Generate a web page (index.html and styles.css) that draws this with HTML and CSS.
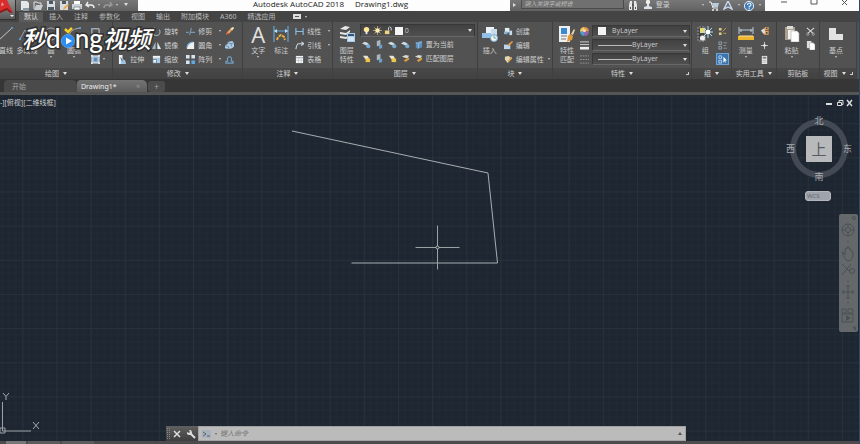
FILE: index.html
```html
<!DOCTYPE html>
<html lang="zh-CN">
<head>
<meta charset="utf-8">
<title>Autodesk AutoCAD 2018 - Drawing1.dwg</title>
<link rel="stylesheet" href="styles.css">
</head>
<body>
<svg class="sprite" aria-hidden="true">
  <symbol id="new" viewBox="0 0 10 10"><path d="M1 0h6l2 2v7H1z" fill="#e4e8ea"/><path d="M3 7h6v3H3z" fill="#8b9ba5"/></symbol>
  <symbol id="open" viewBox="0 0 10 10"><path d="M1 8V1h3l1 1h3v2" fill="none" stroke="#e2e2e2"/><path d="M3 4h7L8 9H1z" fill="#c5cdd2"/></symbol>
  <symbol id="save" viewBox="0 0 10 10"><path d="M1 0h8v9H1z" fill="#d5dce2"/><path d="M3 0h4v3H3zM2 6h6v3H2z" fill="#4d5962"/></symbol>
  <symbol id="saveas" viewBox="0 0 10 10"><path d="M1 0h8v9H1z" fill="#d5dce2"/><path d="M3 0h4v3H3z" fill="#4d5962"/><path d="M4 9l1-3 4-3 1 1-4 4z" fill="#eba949"/></symbol>
  <symbol id="print" viewBox="0 0 10 10"><path d="M2 0h6v4H2z" fill="#fff"/><path d="M0 3h10v5H0z" fill="#cbd3d9"/><path d="M2 6h6v3H2z" fill="#f5f5f5" stroke="#59636a" stroke-width=".6"/></symbol>
  <symbol id="undo" viewBox="0 0 10 10"><path d="M3 1L1 4l3 2M1 4h5q3 0 3 3" fill="none" stroke="#eee" stroke-width="1.4"/></symbol>
  <symbol id="redo" viewBox="0 0 10 10"><path d="M7 1l2 3-3 2M9 4H4Q1 4 1 7" fill="none" stroke="#999" stroke-width="1.4"/></symbol>
  <symbol id="glasses" viewBox="0 0 10 10"><path d="M1 9V4l1-4h2v9zM6 9V0h2l1 4v5z" fill="#e6e6e6"/><path d="M4 3h2v2H4zM2 6h1v2H2zM7 6h1v2H7z" fill="#555"/></symbol>
  <symbol id="user" viewBox="0 0 10 10"><circle cx="5" cy="2" r="2.2" fill="#eee"/><path d="M4 4h2v2l3 1v2H1V7l3-1z" fill="#dce3ea"/></symbol>
  <symbol id="cart" viewBox="0 0 10 10"><path d="M0 1h2l2 6h5" fill="none" stroke="#eee"/><path d="M3 2h7L9 6H4z" fill="#b9cada"/><circle cx="4" cy="9" r="1" fill="#eee"/><circle cx="8" cy="9" r="1" fill="#eee"/></symbol>
  <symbol id="app" viewBox="0 0 10 10"><path d="M5 0L1 8l4-2 4 2z" fill="none" stroke="#c9dff6" stroke-width="1.3"/></symbol>
  <symbol id="help" viewBox="0 0 10 10"><circle cx="5" cy="5" r="4.6" fill="#437bb6" stroke="#e3eef8"/><path d="M3.5 4q0-2 1.7-2T7 3.7Q7 4.700 5.200 5.500V6.500M5.200 7.300v1" fill="none" stroke="#fff" stroke-width="1.1"/></symbol>
  <symbol id="line" viewBox="0 0 16 16"><path d="M1 14L14 2" stroke="#bdc5ca"/><path d="M0 13h2v2H0zM13 1h2v2h-2z" fill="#5b9ad0"/></symbol>
  <symbol id="pline" viewBox="0 0 16 16"><path d="M1 13L6 4l6 7q4 0 2-6" fill="none" stroke="#9a9fa3"/><path d="M0 12h2v2H0z" fill="#5b9ad0"/></symbol>
  <symbol id="circle" viewBox="0 0 16 16"><circle cx="8" cy="8" r="6" fill="none" stroke="#a5a5a5"/><path d="M7 7h2v2H7z" fill="#5b9ad0"/></symbol>
  <symbol id="arc" viewBox="0 0 16 16"><path d="M2 14Q2 3 14 2" fill="none" stroke="#a5a5a5"/><path d="M1 13h2v2H1zM13 1h2v2h-2z" fill="#5b9ad0"/></symbol>
  <symbol id="rect" viewBox="0 0 10 10"><path d="M1 2h8v6H1z" fill="none" stroke="#ddd"/><path d="M0 1h2v2H0zM8 7h2v2H8z" fill="#68a7dd"/></symbol>
  <symbol id="hatch" viewBox="0 0 10 10"><path d="M1 1h8v8H1z" fill="#a5c3de" stroke="#e0e0e0"/><path d="M3 3h4v4H3z" fill="#5e8eb9"/><path d="M0 0h2v2H0zM8 0h2v2H8zM0 8h2v2H0zM8 8h2v2H8z" fill="#dce8f3"/></symbol>
  <symbol id="stretch" viewBox="0 0 10 10"><path d="M1 0h4v10H1z" fill="#eee"/><path d="M4 4l4 2 1 4H3z" fill="#9ec7e8"/><path d="M3 3l2 4" stroke="#365d7d"/></symbol>
  <symbol id="rotate" viewBox="0 0 10 10"><path d="M3 2a4 4 0 1 0 5 1M3 2V0M3 2H1" fill="none" stroke="#9fabb5" stroke-width="1.2"/></symbol>
  <symbol id="mirror" viewBox="0 0 10 10"><path d="M4 1v8H0z" fill="#9db9d0"/><path d="M6 1v8h4z" fill="#e7ebed"/></symbol>
  <symbol id="scale" viewBox="0 0 10 10"><path d="M1 1h8v8H1z" fill="#a9cbe6"/><path d="M1 1h8v2H1z" fill="#f2f2f2"/><path d="M1 5h4v4H1z" fill="#f0f0f0" stroke="#456987" stroke-width=".7"/></symbol>
  <symbol id="trim" viewBox="0 0 10 10"><path d="M0 6h3M5 6h5M6 1L4 9" stroke="#7899b3" stroke-width="1.2"/></symbol>
  <symbol id="fillet" viewBox="0 0 10 10"><path d="M1 9V6Q2 1 8 1h1v8z" fill="#f0f0ee"/><path d="M1 7Q2 2 8 1" fill="none" stroke="#69a9db" stroke-width="1.4"/></symbol>
  <symbol id="array" viewBox="0 0 10 10"><path d="M0 0h4v4H0zM6 0h4v4H6zM0 6h4v4H0z" fill="#d6e5f0"/><path d="M6 6h4v4H6z" fill="#61a7e2"/></symbol>
  <symbol id="erase" viewBox="0 0 10 10"><path d="M1 8l2-3 5-5 2 1-5 6z" fill="#e8a15b"/><path d="M1 9l1-3 3 1z" fill="#e95c42"/><path d="M6 2l3-2 1 1-2 3z" fill="#ebe1c5"/></symbol>
  <symbol id="explode" viewBox="0 0 10 10"><path d="M0 5l3-2V1l5-1 2 2v4L8 8 4 9 0 8z" fill="#accce6"/><path d="M0 5l4 1v3M3 2l4 1 3-1M7 3v3" fill="none" stroke="#587b9a" stroke-width=".8"/></symbol>
  <symbol id="offset" viewBox="0 0 10 10"><path d="M1 9V7h2q-1-5 2-5t2 5h2v2z" fill="none" stroke="#72a4ca" stroke-width="1.2"/></symbol>
  <symbol id="dim" viewBox="0 0 16 16"><path d="M1 0v16M15 0v16M1 5h14" stroke="#62a4d7" stroke-width="1.2"/><path d="M1 5l3-2v4zM15 5l-3-2v4z" fill="#bde0fa"/><path d="M4 14l1-3 3-2 3 2 1 3" fill="none" stroke="#e8ae42" stroke-width="2" stroke-dasharray="3 1"/></symbol>
  <symbol id="linear" viewBox="0 0 10 10"><path d="M1 1v8M9 1v8M1 5h8" stroke="#8cbbe0" stroke-width="1.3"/></symbol>
  <symbol id="leader" viewBox="0 0 10 10"><path d="M1 9Q2 3 4 3h5M7 1l3 2-3 2" fill="none" stroke="#cbd8e2" stroke-width="1.2"/></symbol>
  <symbol id="table" viewBox="0 0 10 10"><path d="M1 1h8v8H1z" fill="#f4f4f4"/><path d="M1 3h8" stroke="#8c9da9"/><path d="M4 3v6M7 3v6M1 6h8" stroke="#b7bfc5" stroke-width=".6"/></symbol>
  <symbol id="layers" viewBox="0 0 16 16"><path d="M1 3l5-3 5 1-4 3zM1 6l6 1 4-3v2L7 9 1 8zM1 10l6 1 3-2v2l-3 2-6-1z" fill="#e8e8e8"/><path d="M8 7h8v9H8z" fill="#a9cae7"/><path d="M9 8h6v2H9z" fill="#31587b"/><path d="M9 12h6M9 14h6" stroke="#fff"/></symbol>
  <symbol id="bulb" viewBox="0 0 10 10"><circle cx="5" cy="4" r="3" fill="#ffe894"/><path d="M4 6h2v3H4z" fill="#eee"/></symbol>
  <symbol id="sun" viewBox="0 0 10 10"><path d="M5 0v10M0 5h10M1.500 1.500l7 7M8.500 1.500l-7 7" stroke="#b3a67c"/><circle cx="5" cy="5" r="2.500" fill="#fff0b0"/></symbol>
  <symbol id="lock" viewBox="0 0 10 10"><path d="M1 5h5v4H1z" fill="#f0d383"/><path d="M5 5V2q1-2 3 0v3" fill="none" stroke="#ddd"/></symbol>
  <symbol id="layer-a" viewBox="0 0 10 10"><path d="M0 4l3-2 3 1 2 2-3 1z" fill="#d4dadd"/><circle cx="7" cy="7" r="2.300" fill="#75acd7"/></symbol>
  <symbol id="layer-b" viewBox="0 0 10 10"><path d="M2 1l4-1v6l-4 1z" fill="#a9b6c1"/><path d="M4 6l4-1v4l-3 1z" fill="#6c9fcc"/></symbol>
  <symbol id="layer-c" viewBox="0 0 10 10"><path d="M1 2h5l2 3-4 1z" fill="#e9e3cf"/><path d="M4 5h5v4H4z" fill="#ecc54c"/></symbol>
  <symbol id="layer-d" viewBox="0 0 10 10"><path d="M1 3l4-2 4 1-2 3z" fill="#d6d8cf"/><path d="M3 7l6-3v2L5 9z" fill="#df9e3c"/></symbol>
  <symbol id="layer-e" viewBox="0 0 10 10"><path d="M2 3l5-2 2 1v6l-5 2-2-2z" fill="#5c91bf"/><path d="M2 3l3 1v5M5 4l4-2" fill="none" stroke="#a3bdd2"/></symbol>
  <symbol id="insert" viewBox="0 0 16 16"><path d="M4 1h8v7H4z" fill="#ecf2f6"/><path d="M0 7h9v5H0z" fill="#91c1e8"/><path d="M9 3h6v6H9z" fill="#c7ddec"/><circle cx="12" cy="12" r="3.500" fill="#f1f3f5" stroke="#82b1d7"/><path d="M12 9v3h2" fill="none" stroke="#6aa"/></symbol>
  <symbol id="create" viewBox="0 0 10 10"><path d="M1 1h5v5H1z" fill="#e3edf4"/><path d="M0 5h4v3H0z" fill="#81b4dc"/><path d="M6 4h3v5H6z" fill="#c4dcee"/></symbol>
  <symbol id="edit" viewBox="0 0 10 10"><path d="M0 4h7v5H0z" fill="#b9d7ef"/><path d="M4 6l1-3 4-3 1 1-4 4z" fill="#e99b47"/></symbol>
  <symbol id="attr" viewBox="0 0 10 10"><path d="M1 2l4-1 4 3-5 5-3-4z" fill="#ded8b9"/><path d="M4 7l4-5 1 1-4 5z" fill="#e5a035"/></symbol>
  <symbol id="match" viewBox="0 0 16 16"><path d="M0 0h11v16H0z" fill="#eef0f2"/><path d="M2 2h6v6H2z" fill="#398ace"/><path d="M2 10h6M2 13h5" stroke="#777"/><path d="M9 10l2-2 3 2-1 4-5 2z" fill="#e29b38"/><path d="M12 8l3-5 1 1-2 5z" fill="#ecd3b1"/></symbol>
  <symbol id="wheel" viewBox="0 0 10 10"><path d="M5 5V0a5 5 0 0 1 5 5z" fill="#eb9142"/><path d="M5 5h5a5 5 0 0 1-5 5z" fill="#9a60aa"/><path d="M5 5v5a5 5 0 0 1-5-5z" fill="#5098d1"/><path d="M5 5H0a5 5 0 0 1 5-5z" fill="#f2cf59"/><circle cx="5" cy="4" r="1.700" fill="#f3d9d0"/></symbol>
  <symbol id="weight" viewBox="0 0 10 10"><path d="M0 1h10M0 4h10" stroke="#ddd"/><path d="M0 8h10" stroke="#eee" stroke-width="3"/></symbol>
  <symbol id="ltype" viewBox="0 0 10 10"><path d="M0 1h10M0 5h10M0 9h10" stroke="#999" stroke-dasharray="2 1"/></symbol>
  <symbol id="group" viewBox="0 0 16 16"><path d="M1 1v14h7V1z" fill="#444" stroke="#999" stroke-dasharray="2 1"/><path d="M3 2h5v5H3z" fill="#e8da75"/><circle cx="5.500" cy="12" r="2.600" fill="#eee"/><path d="M11 0v12M5 6h11M7 2l8 8M15 2l-8 8" stroke="#a7daf9"/><circle cx="11" cy="6" r="2.300" fill="#fff"/></symbol>
  <symbol id="ungroup" viewBox="0 0 10 10"><path d="M1 1h3v3H1zM1 6h3v3H1z" fill="#d5cd83"/><path d="M5 5l4-4M6 7h3" stroke="#dda04a"/></symbol>
  <symbol id="gedit" viewBox="0 0 10 10"><path d="M1 1h3v3H1zM1 6h3v3H1z" fill="none" stroke="#98a7b2"/><path d="M6 2h4M6 5h3M6 8h4" stroke="#8699a8"/></symbol>
  <symbol id="gsel" viewBox="0 0 10 10"><path d="M1 1h3v3H1zM1 6h3v3H1z" fill="none" stroke="#b5d4ef"/><path d="M6 2v7l1-2 2 2-1-3h2z" fill="#fff"/></symbol>
  <symbol id="measure" viewBox="0 0 16 16"><path d="M1 1v7M15 1v7M1 4h14" stroke="#b8cbd7"/><path d="M3 3v3M13 3v3" stroke="#b8cbd7"/><path d="M0 10h16v4H0z" fill="#eeb52e"/><path d="M1 10h14" stroke="#ffe39a"/></symbol>
  <symbol id="quick" viewBox="0 0 10 10"><path d="M1 4l4-3 1 4-1 4z" fill="#ddd"/><path d="M6 0h3v3H6zM6 5h3v3H6z" fill="none" stroke="#eba14f" stroke-width="1.200"/></symbol>
  <symbol id="point" viewBox="0 0 10 10"><path d="M5 1v8M1 5h8" stroke="#ccc"/><circle cx="5" cy="5" r="1.400" fill="#eee"/></symbol>
  <symbol id="calc" viewBox="0 0 10 10"><path d="M2 1h6v9H2z" fill="#e7e7e7"/><path d="M3 2h4v2H3z" fill="#737b82"/><path d="M3 6h4M3 8h4" stroke="#a1a1a1" stroke-dasharray="1 .5"/></symbol>
  <symbol id="paste" viewBox="0 0 16 16"><path d="M1 1h10v13H1z" fill="#aaa08c"/><path d="M3 0h6v3H3z" fill="#ddd"/><path d="M4 4h6v9H4z" fill="#f2f2f2"/><path d="M7 5h6l2 2v9H7z" fill="#fff" stroke="#a5a5a5" stroke-width=".6"/></symbol>
  <symbol id="cut" viewBox="0 0 10 10"><path d="M1 1l7 6M9 1L2 7" stroke="#ddd" stroke-width="1.200"/><circle cx="2" cy="8" r="1.300" fill="none" stroke="#aaa"/><circle cx="8" cy="8" r="1.300" fill="none" stroke="#aaa"/></symbol>
  <symbol id="copy" viewBox="0 0 10 10"><path d="M1 0h5v8H1z" fill="#ddd"/><path d="M4 2h4l2 2v6H4z" fill="#fff" stroke="#999" stroke-width=".5"/></symbol>
  <symbol id="base" viewBox="0 0 16 16"><path d="M1 2h7v6h7v6H1z" fill="#e3e3e3"/></symbol>
</svg>

<header class="titlebar">
  <div class="quick">
    <button aria-label="新建"><svg><use href="#new"/></svg></button>
    <button aria-label="打开"><svg><use href="#open"/></svg></button>
    <button aria-label="保存"><svg><use href="#save"/></svg></button>
    <button aria-label="另存为"><svg><use href="#saveas"/></svg></button>
    <button aria-label="打印"><svg><use href="#print"/></svg></button>
    <button aria-label="放弃"><svg><use href="#undo"/></svg></button><i class="arrow"></i>
    <button aria-label="重做"><svg><use href="#redo"/></svg></button><i class="arrow"></i><i class="arrow big"></i>
  </div>
  <h1 class="title"><span>Autodesk AutoCAD 2018</span><span>Drawing1.dwg</span></h1>
  <div class="info">
    <i class="play"></i>
    <input class="search" type="search" aria-label="搜索" placeholder="键入关键字或短语">
    <button aria-label="查找"><svg><use href="#glasses"/></svg></button>
    <button class="login"><svg><use href="#user"/></svg>登录</button><i class="arrow"></i>
    <button aria-label="商店"><svg><use href="#cart"/></svg></button>
    <button aria-label="应用"><svg><use href="#app"/></svg></button><i class="arrow"></i>
    <button aria-label="帮助"><svg><use href="#help"/></svg></button><i class="arrow"></i>
  </div>
  <div class="window">
    <button aria-label="最小化"><svg viewBox="0 0 10 10"><path d="M2 2h6"/></svg></button>
    <button aria-label="最大化"><svg viewBox="0 0 10 10"><path d="M2 0v4h6V0"/></svg></button>
    <button aria-label="关闭"><svg viewBox="0 0 10 10"><path d="M3 0l5 5M8 0L3 5"/></svg></button>
  </div>
  <button class="logo" aria-label="应用程序菜单"><svg viewBox="0 0 15 19"><path d="M0 0h7l6 13-4-1-2-3-7 4z" fill="#d92c2c"/><path d="M0 11l7-3 6 5-4-1-2-2-7 3z" fill="#8e1717"/><path d="M1 6l1-4 2 3z" fill="#f1a0a0"/><path d="M10 15h4l-2 2z" fill="#eee"/></svg></button>
</header>

<nav class="tabs">
  <a href="#" class="current">默认</a><a href="#">插入</a><a href="#">注释</a><a href="#">参数化</a><a href="#">视图</a><a href="#">输出</a><a href="#">附加模块</a><a href="#">A360</a><a href="#">精选应用</a>
  <button class="minimize" aria-label="最小化功能区"><span></span><i class="arrow"></i></button>
</nav>

<main class="ribbon">
  <section class="panel draw">
    <div class="tools">
      <button class="large first"><svg><use href="#line"/></svg>直线</button>
      <button class="large wide"><svg><use href="#pline"/></svg>多段线</button>
      <button class="large"><svg><use href="#circle"/></svg>圆<i class="arrow"></i></button>
      <button class="large"><svg><use href="#arc"/></svg>圆弧<i class="arrow"></i></button>
      <div class="stack">
        <button class="small" aria-label="矩形"><svg><use href="#rect"/></svg></button>
        <button class="small" aria-label="椭圆"></button>
        <button class="small" aria-label="图案填充"><svg><use href="#hatch"/></svg><i class="arrow"></i></button>
      </div>
    </div>
    <footer>绘图<i class="arrow big"></i></footer>
  </section>
  <section class="panel modify">
    <div class="tools">
      <div class="stack end"><button class="small"><svg><use href="#stretch"/></svg>拉伸</button></div>
      <div class="stack">
        <button class="small"><svg><use href="#rotate"/></svg>旋转</button>
        <button class="small"><svg><use href="#mirror"/></svg>镜像</button>
        <button class="small"><svg><use href="#scale"/></svg>缩放</button>
      </div>
      <div class="stack">
        <button class="small spread"><svg><use href="#trim"/></svg>修剪<i class="arrow"></i></button>
        <button class="small spread"><svg><use href="#fillet"/></svg>圆角<i class="arrow"></i></button>
        <button class="small spread"><svg><use href="#array"/></svg>阵列<i class="arrow"></i></button>
      </div>
      <div class="stack">
        <button class="small" aria-label="删除"><svg><use href="#erase"/></svg></button>
        <button class="small" aria-label="分解"><svg><use href="#explode"/></svg></button>
        <button class="small" aria-label="偏移"><svg><use href="#offset"/></svg></button>
      </div>
    </div>
    <footer>修改<i class="arrow big"></i></footer>
  </section>
  <section class="panel annotate">
    <div class="tools">
      <button class="large"><span class="glyph">A</span>文字<i class="arrow"></i></button>
      <button class="large"><svg><use href="#dim"/></svg>标注</button>
      <div class="stack">
        <button class="small spread"><svg><use href="#linear"/></svg>线性<i class="arrow"></i></button>
        <button class="small spread"><svg><use href="#leader"/></svg>引线<i class="arrow"></i></button>
        <button class="small"><svg><use href="#table"/></svg>表格</button>
      </div>
    </div>
    <footer>注释<i class="arrow big"></i></footer>
  </section>
  <section class="panel layer">
    <div class="tools">
      <button class="large"><svg><use href="#layers"/></svg>图层<br>特性</button>
      <div class="stack fill">
        <label class="combo"><svg><use href="#bulb"/></svg><svg><use href="#sun"/></svg><svg><use href="#lock"/></svg><span class="swatch"></span><select aria-label="图层"><option>0</option></select><i class="arrow big"></i></label>
        <div class="row"><svg><use href="#layer-a"/></svg><svg><use href="#layer-b"/></svg><svg><use href="#layer-a"/></svg><svg><use href="#layer-a"/></svg><button class="small"><svg><use href="#layer-e"/></svg>置为当前</button></div>
        <div class="row"><svg><use href="#layer-c"/></svg><svg><use href="#layer-b"/></svg><svg><use href="#layer-c"/></svg><svg><use href="#layer-d"/></svg><button class="small"><svg><use href="#layer-d"/></svg>匹配图层</button></div>
      </div>
    </div>
    <footer>图层<i class="arrow big"></i></footer>
  </section>
  <section class="panel block">
    <div class="tools">
      <button class="large"><svg><use href="#insert"/></svg>插入</button>
      <div class="stack">
        <button class="small"><svg><use href="#create"/></svg>创建</button>
        <button class="small"><svg><use href="#edit"/></svg>编辑</button>
        <button class="small spread"><svg><use href="#attr"/></svg>编辑属性<i class="arrow"></i></button>
      </div>
    </div>
    <footer>块<i class="arrow big"></i></footer>
  </section>
  <section class="panel props">
    <div class="tools">
      <button class="large"><svg><use href="#match"/></svg>特性<br>匹配</button>
      <div class="stack fill">
        <div class="row"><svg><use href="#wheel"/></svg><label class="combo"><span class="swatch"></span><select aria-label="颜色"><option>ByLayer</option></select><i class="arrow big"></i></label></div>
        <div class="row"><svg><use href="#weight"/></svg><label class="combo"><span class="rule"></span><select aria-label="线宽"><option>ByLayer</option></select><i class="arrow big"></i></label></div>
        <div class="row"><svg><use href="#ltype"/></svg><label class="combo"><span class="rule"></span><select aria-label="线型"><option>ByLayer</option></select><i class="arrow big"></i></label></div>
      </div>
    </div>
    <footer>特性<i class="arrow big"></i><i class="corner"></i></footer>
  </section>
  <section class="panel grp">
    <div class="tools">
      <button class="large"><svg><use href="#group"/></svg>组</button>
      <div class="stack">
        <button class="small" aria-label="解除编组"><svg><use href="#ungroup"/></svg></button>
        <button class="small" aria-label="组编辑"><svg><use href="#gedit"/></svg></button>
        <button class="small on" aria-label="启用组选择"><svg><use href="#gsel"/></svg></button>
      </div>
    </div>
    <footer>组<i class="arrow big"></i></footer>
  </section>
  <section class="panel util">
    <div class="tools">
      <button class="large"><svg><use href="#measure"/></svg>测量<i class="arrow"></i></button>
      <div class="stack">
        <button class="small" aria-label="快速选择"><svg><use href="#quick"/></svg></button>
        <button class="small" aria-label="点坐标"><svg><use href="#point"/></svg></button>
        <button class="small" aria-label="计算器"><svg><use href="#calc"/></svg></button>
      </div>
    </div>
    <footer>实用工具<i class="arrow big"></i></footer>
  </section>
  <section class="panel clip">
    <div class="tools">
      <button class="large"><svg><use href="#paste"/></svg>粘贴<i class="arrow"></i></button>
      <div class="stack">
        <button class="small" aria-label="剪切"><svg><use href="#cut"/></svg></button>
        <button class="small" aria-label="复制"><svg><use href="#copy"/></svg></button>
      </div>
    </div>
    <footer>剪贴板</footer>
  </section>
  <section class="panel view">
    <div class="tools"><button class="large"><svg><use href="#base"/></svg>基点<i class="arrow"></i></button></div>
    <footer>视图<i class="arrow big"></i><i class="corner"></i></footer>
  </section>
  <div class="watermark"><b>秒</b><b class="latin">d</b><svg viewBox="0 0 14 22"><circle cx="7" cy="14" r="6.500" fill="#2f8df0" stroke="#6bb2f8"/><path d="M5 10.500v7l6-3.500z" fill="#fff"/><path d="M4 2l3 3 4-4" fill="none" stroke="#f4cf27" stroke-width="2.500"/></svg><b class="latin">ng</b><b>视频</b></div>
</main>

<nav class="files">
  <a href="#" class="file">开始</a>
  <a href="#" class="file active">Drawing1*<span>×</span></a>
  <button class="add" aria-label="新图形">+</button>
</nav>

<section class="canvas">
  <svg class="drawing" role="img" aria-label="图形">
    <defs>
      <pattern id="grid" x="22.300" y="28.200" width="34.150" height="34.150" patternUnits="userSpaceOnUse">
        <path d="M6.830 0v34.150M13.660 0v34.150M20.490 0v34.150M27.320 0v34.150M0 6.830h34.150M0 13.660h34.150M0 20.490h34.150M0 27.320h34.150" stroke="#212b35" stroke-width=".8"/>
        <path d="M.5 0v34.150M0 .5h34.150" stroke="#27323d"/>
      </pattern>
    </defs>
    <rect width="100%" height="100%" fill="url(#grid)"/>
    <path d="M292 36L488 78l9.500 90H351.500" fill="none" stroke="#a9adb1"/>
    <path d="M437.500 130.500v44M415.500 152.500h44" stroke="#9ca1a6"/>
    <circle cx="437.500" cy="152.500" r="1.500" fill="#1e2730" stroke="#b4b8bc"/>
  </svg>
  <span class="viewlabel">-][俯视][二维线框]</span>
  <svg class="winctl" viewBox="0 0 28 8"><path d="M1 5h6" stroke="#ddd" stroke-width="2"/><path d="M12.500 3.500h4v3h-4zM14 3V1.500h4v4h-1" fill="none" stroke="#ddd"/><path d="M22 1l5 6M27 1l-5 6" stroke="#ddd" stroke-width="1.500"/></svg>
  <div class="compass">
    <span>北</span>
    <div class="mid"><span>西</span><button>上</button><span>东</span></div>
    <span>南</span>
  </div>
  <button class="wcs">WCS</button>
  <svg class="navbar" viewBox="0 0 19 118" aria-hidden="true">
    <g fill="none" stroke="#4b5055">
      <circle cx="9" cy="16" r="6"/><circle cx="9" cy="16" r="2.500"/><path d="M9 10v3M9 19v3M3 16h3M12 16h3"/>
      <path d="M6 44q-4-5-2-6l2 3v-6q1-1 2 0v-2q2-1 2 1v1q2-1 2 1v1q2-1 2 2 0 8-5 8-2 0-3-3z"/>
      <path d="M3 50l9 9M12 50L3 61"/><circle cx="13" cy="57" r="2.500"/>
      <path d="M9 71v14M3 78h12M7 73l2-2 2 2M7 83l2 2 2-2M5 76l-2 2 2 2M13 76l2 2-2 2"/>
      <path d="M3 95h4v4H3zM9 95h5v4H9zM3 100h11v8H3z"/><circle cx="15" cy="4" r="1.500"/><path d="M14 113h3l-1 3z"/>
    </g>
    <path d="M7 101l5 3-5 3zM8 27h2v1H8zM8 67h2v1H8zM8 88h2v1H8z" fill="#4b5055"/>
  </svg>
  <svg class="ucs" viewBox="0 0 42 48"><path d="M2.500 9v29H31M0 35h5v5H0z" fill="none" stroke="#9da2a6"/><path d="M3 0l3 3.500L9 0M6 3.500V7M33 29l6 7M39 29l-6 7" fill="none" stroke="#a7abae"/></svg>
  <form class="command">
    <span class="handle"></span>
    <button type="button" aria-label="关闭"><svg viewBox="0 0 10 10"><path d="M2 2l6 6M8 2L2 8" stroke="#ddd" stroke-width="1.500"/></svg></button>
    <button type="button" aria-label="自定义"><svg viewBox="0 0 10 10"><path d="M4 4l5 5" stroke="#ddd" stroke-width="2"/><path d="M1 3a2.500 2.500 0 1 0 2-2l1 2-1 1z" fill="#ddd"/></svg></button>
    <div class="entry">
      <svg class="prompt" viewBox="0 0 10 10"><path d="M0 1h9v8H0z" fill="#a9b1bb"/><path d="M1 3l3 2-3 2M5 7h3" fill="none" stroke="#596371"/></svg><i class="arrow"></i>
      <input type="text" aria-label="命令" placeholder="键入命令"><i class="arrow up"></i>
    </div>
  </form>
</section>
<footer class="status"><span></span><span></span><span></span></footer>
</body>
</html>
```
FILE: styles.css
```css
* { box-sizing: border-box; }

body {
  margin: 0;
  min-height: 100vh;
  display: flex;
  flex-direction: column;
  overflow: hidden;
  border-right: 1px solid #2d4967;
  background: #1e2731;
  color: #cecece;
  font: 7px/9px "Noto Sans", "Noto Sans CJK SC", sans-serif;
}

button, input, select {
  margin: 0;
  padding: 0;
  border: 0;
  background: none;
  color: inherit;
  font: inherit;
}

a { color: inherit; text-decoration: none; }
svg { display: block; width: 10px; height: 10px; flex: none; }
.sprite { position: absolute; width: 0; height: 0; }

.arrow {
  flex: none;
  border: 1px solid transparent;
  border-top: 2px solid #ccc;
  border-bottom: 0;
}
.arrow.big { border-width: 2px 2px 0; border-top: 3px solid #ddd; }
.arrow.up { border: 2px solid transparent; border-top: 0; border-bottom: 3px solid #555; }

/* Title bar */
.titlebar {
  position: relative;
  display: flex;
  height: 11px;
  background: linear-gradient(#777, #626262);
}
.titlebar button { height: 8px; }
.quick {
  display: flex;
  align-items: center;
  gap: 3px;
  width: 138px;
  height: 9px;
  padding-left: 20px;
}
.quick .arrow.big { margin-left: 3px; }
.title {
  flex: 1;
  display: flex;
  gap: 11px;
  margin: 0;
  padding-left: 115px;
  background: #fdfdfd;
  color: #222;
  font: 8px/7px "Open Sans", sans-serif;
  white-space: nowrap;
}
.info {
  display: flex;
  align-items: center;
  justify-content: space-between;
  width: 255px;
  height: 9px;
  padding: 0 4px 0 3px;
}
.play { border: 2px solid transparent; border-left: 3px solid #ddd; border-right: 0; }
.search {
  width: 103px;
  height: 9px;
  padding-left: 3px;
  background: #707070;
  border: 1px solid #4b4b4b;
  border-top: 0;
  font-size: 6px;
  font-style: italic;
}
.search::placeholder { color: #bcbcbc; opacity: 1; }
.login { display: flex; align-items: center; gap: 3px; margin-right: 28px; }
.window {
  display: flex;
  justify-content: space-around;
  width: 94px;
  padding-left: 4px;
  background: #fdfdfd;
}
.window svg { fill: none; stroke: #555; }
.logo {
  position: absolute;
  top: 0;
  left: 0;
  width: 16px;
  background: linear-gradient(#929292, #5a5a5a);
  border: solid #333;
  border-width: 0 1px 1px 0;
}
.titlebar .logo { height: 20px; }
.logo svg { width: 15px; height: 19px; }

/* Ribbon tabs */
.tabs {
  display: flex;
  gap: 11px;
  height: 11px;
  padding-left: 24px;
  background: #444;
  line-height: 11px;
  color: #bbb;
}
.tabs .current { margin: 1px -5px 0; padding: 0 5px; background: #5b5b5b; line-height: 9px; color: #ddd; }
.minimize { display: flex; align-items: center; gap: 4px; margin-left: 6px; }
.minimize span { width: 8px; height: 5px; border: 2px solid #ddd; background: #555; }

/* Ribbon */
.ribbon {
  position: relative;
  display: flex;
  height: 57px;
  padding-right: 2px;
  background: #515151;
}
.panel {
  display: flex;
  flex-direction: column;
  flex: 1 1 0;
  min-width: 0;
  border-right: 1px solid #3f3f3f;
  background: #525252;
}
.draw { flex-grow: 113; }
.modify { flex-grow: 130; }
.annotate { flex-grow: 89; }
.layer { flex-grow: 145; }
.block { flex-grow: 75; }
.props { flex-grow: 139; }
.grp { flex-grow: 39; }
.util { flex-grow: 44; }
.clip { flex-grow: 43; }
.view { flex-grow: 36; }

.panel footer {
  display: flex;
  align-items: center;
  justify-content: center;
  gap: 4px;
  height: 11px;
  background: linear-gradient(#484848, #414141);
  white-space: nowrap;
}
.tools {
  display: flex;
  gap: 4px;
  flex: 1;
  padding: 2px 1px 0 4px;
}
.large {
  display: flex;
  flex-direction: column;
  align-items: center;
  width: 18px;
  padding-top: 2px;
  white-space: nowrap;
  flex: none;
}
.large svg { width: 16px; height: 16px; margin-bottom: 4px; }
.large .arrow { margin-top: 1px; }
.glyph { height: 16px; margin-bottom: 4px; font: 22px/17px "Open Sans", sans-serif; color: #e2e2e2; }

.stack { display: flex; flex-direction: column; }
.stack.end { justify-content: flex-end; padding-bottom: 2px; }
.fill { flex: 1; min-width: 0; }
.small {
  display: flex;
  align-items: center;
  gap: 3px;
  height: 14px;
  white-space: nowrap;
}
.small svg { width: 9px; height: 9px; }
.spread .arrow { margin-left: 4px; }
.small.on { height: 12px; padding: 0 1px; margin: 1px -2px; background: #3c75ad; border: 1px solid #6ea4d6; }
.row { display: flex; align-items: center; gap: 4px; height: 14px; }
.row > svg { width: 9px; height: 9px; }

.draw .tools { gap: 5px; padding-left: 0; }
.draw .first { width: 12px; }
.draw .wide { width: 20px; }
.draw .stack { margin-left: 3px; }
.modify .tools { gap: 8px; padding-left: 5px; }
.modify .stack + .stack + .stack + .stack { margin-left: -4px; }
.modify .spread .arrow { margin-left: 4px; }
.annotate .tools { gap: 5px; padding-left: 6px; }
.layer .tools { padding-left: 5px; }
.layer .row { padding-left: 2px; }
.block .tools { padding-left: 3px; gap: 5px; }
.block .spread .arrow { margin-left: 1px; }
.props .tools { padding-left: 5px; }
.props .row { gap: 3px; }
.grp .large { width: 16px; }
.grp .tools, .util .tools { gap: 5px; padding-left: 5px; }
.clip .tools { gap: 5px; padding-left: 6px; }
.view .tools { justify-content: center; padding: 2px 4px 0 0; }

.combo {
  display: flex;
  align-items: center;
  gap: 3px;
  flex: 1;
  min-width: 0;
  height: 12px;
  padding: 0 2px 0 5px;
  background: linear-gradient(#414141, #505050);
  border: 1px solid #383838;
  border-bottom-color: #686868;
}
.layer .combo { flex: none; height: 13px; padding-left: 1px; margin-right: 1px; gap: 2px; }
.layer .combo svg { width: 9px; height: 9px; }
.combo select { flex: 1; min-width: 0; appearance: none; font: 7px/10px "Open Sans", sans-serif; }
.swatch { width: 8px; height: 8px; background: #f4f4f4; }
.props .swatch { margin-right: 3px; }
.rule { width: 34px; height: 1px; background: #bbb; margin-right: -3px; }
.corner { width: 3px; height: 3px; border: solid #ccc; border-width: 0 1px 1px 0; }
.props footer { position: relative; }
.props .corner { position: absolute; right: 2px; }

.watermark {
  position: absolute;
  left: 22px;
  top: 0;
  display: flex;
  align-items: center;
  height: 32px;
  color: #fff;
  font: italic 24px/32px "Noto Sans CJK SC", sans-serif;
  -webkit-text-stroke: 3px #303030;
  paint-order: stroke fill;
}
.watermark b { font-weight: 500; }
.watermark .latin { font: 500 26px/32px Lato, sans-serif; }
.watermark svg { width: 14px; height: 22px; -webkit-text-stroke: 0; }

/* Drawing file tabs */
.files {
  display: flex;
  align-items: flex-end;
  height: 16px;
  padding-left: 4px;
  background: #363636;
  border-bottom: 3px solid #555;
  color: #a5a5a5;
}
.file {
  width: 73px;
  height: 12px;
  padding-left: 8px;
  background: #4a4a4a;
  border-radius: 4px 5px 0 0;
  line-height: 13px;
}
.file.active {
  display: flex;
  justify-content: space-between;
  width: 70px;
  padding: 0 7px 0 4px;
  background: linear-gradient(#747474, #5c5c5c);
  color: #eee;
}
.file span { color: #999; }
.add { width: 17px; height: 11px; margin-left: 1px; background: #4c4c4c; border-radius: 3px; font-size: 8px; line-height: 9px; }

/* Model space */
.canvas { position: relative; flex: 1; }
.drawing { position: absolute; inset: 0; width: 100%; height: 100%; }
.viewlabel { position: absolute; top: 3px; left: 0; }
.winctl { position: absolute; top: 4px; right: 6px; width: 28px; height: 8px; }
.compass {
  position: absolute;
  top: 21px;
  right: 7px;
  display: flex;
  flex-direction: column;
  align-items: center;
  justify-content: space-between;
  width: 66px;
  height: 66px;
  font: 9px/10px "Noto Sans CJK SC", sans-serif;
  color: #a9adb1;
}
.compass::before {
  content: "";
  position: absolute;
  inset: 3px 4px 4px;
  border: 6px solid #434a53;
  border-radius: 50%;
}
.compass span, .compass .mid { position: relative; }
.mid { display: flex; align-items: center; justify-content: space-between; width: 100%; }
.mid button { width: 26px; height: 26px; background: #b8b9ba; color: #555b61; font: 15px/24px "Noto Sans CJK SC", sans-serif; }
.wcs {
  position: absolute;
  top: 96px;
  right: 28px;
  width: 26px;
  height: 10px;
  background: #9fa4aa;
  border: 1px solid #b3b7bc;
  border-radius: 3px;
  color: #626a73;
  font-size: 6px;
  line-height: 8px;
  text-align: left;
  padding-left: 1px;
}
.navbar { position: absolute; top: 119px; right: 1px; width: 19px; height: 118px; background: #64686b; border-radius: 2px; }
.ucs { position: absolute; left: 0; bottom: 0; width: 42px; height: 48px; }

.command {
  position: absolute;
  left: 166px;
  right: 173px;
  bottom: 0;
  display: flex;
  align-items: center;
  gap: 2px;
  height: 15px;
  background: linear-gradient(#606060, #3e3e3e);
}
.handle { width: 3px; height: 11px; margin-left: 1px; border: dotted #888; border-width: 0 1px; }
.command button + button { margin-left: 2px; }
.entry { display: flex; align-items: center; flex: 1; gap: 3px; height: 15px; padding: 0 3px; background: #bbb; border: 1px solid #a3a3a3; }
.entry .arrow { border-top-color: #666; }
.entry input { flex: 1; min-width: 0; font-style: italic; color: #444; }
.entry input::placeholder { color: #777; opacity: 1; }

.status { display: flex; gap: 2px; height: 3px; padding-left: 6px; background: #4d4b4e; }
.status span { width: 32px; background: #5c5c5e; }
.status span:first-child { width: 20px; background: #777; }
```
